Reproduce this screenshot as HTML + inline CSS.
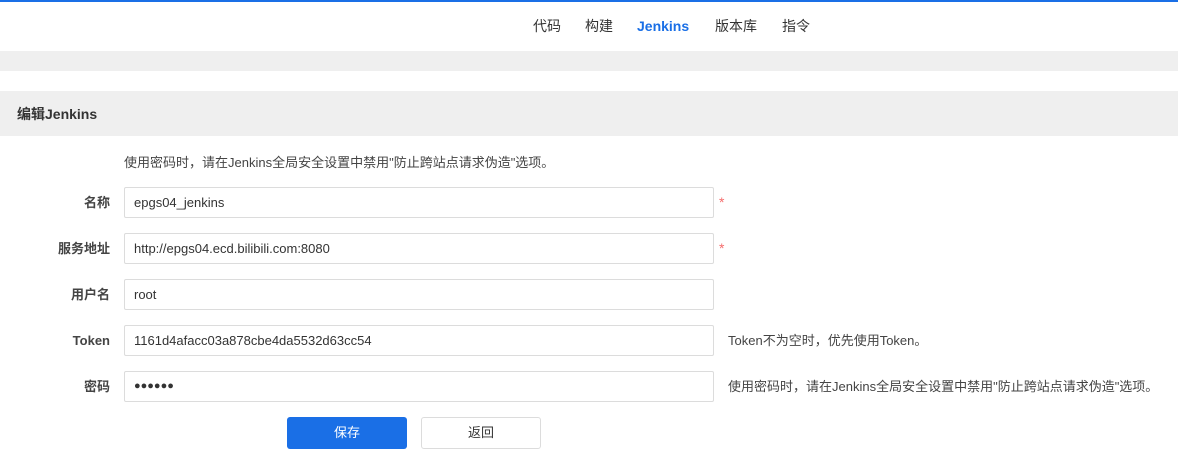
<!DOCTYPE html>
<html><head><meta charset="utf-8"><style>
body{margin:0;width:1178px;height:458px;overflow:hidden;background:#fff;font-family:"Liberation Sans","Noto Sans CJK SC",sans-serif;font-size:13px;color:#333;position:relative;line-height:16px}
.a{position:absolute}
.top{left:0;top:0;width:1178px;height:2px;background:#1a6fe6}
.nav span{position:absolute;top:18px;font-size:14px;color:#333;line-height:16px}
.band{left:0;width:1178px;background:#efefef}
.lbl{position:absolute;right:1068px;font-weight:bold;color:#444;font-size:13px}
.in{position:absolute;left:124px;width:590px;height:31px;border:1px solid #dcdcdc;border-radius:2px;box-sizing:border-box;line-height:29px;padding-left:9px;font-size:13px;color:#333}
.star{position:absolute;left:719px;color:#f56c6c;font-size:14px}
.hint{position:absolute;left:728px;font-size:13px;color:#444}
.btn{position:absolute;top:417px;width:120px;height:32px;border-radius:3px;box-sizing:border-box;text-align:center;line-height:32px;font-size:13px}
</style></head><body>
<div class="a top"></div>
<div class="nav">
<span style="left:533px">代码</span><span style="left:585px">构建</span><span style="left:637px;color:#1a6fe6;font-weight:bold">Jenkins</span><span style="left:715px">版本库</span><span style="left:782px">指令</span>
</div>
<div class="a band" style="top:51px;height:20px"></div>
<div class="a band" style="top:91px;height:45px"></div>
<div class="a" style="left:17px;top:106px;font-weight:bold;font-size:14px;color:#333">编辑Jenkins</div>
<div class="a" style="left:124px;top:155px;color:#444">使用密码时，请在Jenkins全局安全设置中禁用"防止跨站点请求伪造"选项。</div>

<div class="lbl" style="top:195px">名称</div>
<div class="in" style="top:187px">epgs04_jenkins</div><div class="star" style="top:194px">*</div>
<div class="lbl" style="top:241px">服务地址</div>
<div class="in" style="top:233px">http://epgs04.ecd.bilibili.com:8080</div><div class="star" style="top:240px">*</div>
<div class="lbl" style="top:287px">用户名</div>
<div class="in" style="top:279px">root</div>
<div class="lbl" style="top:333px">Token</div>
<div class="in" style="top:325px">1161d4afacc03a878cbe4da5532d63cc54</div>
<div class="hint" style="top:333px">Token不为空时，优先使用Token。</div>
<div class="lbl" style="top:379px">密码</div>
<div class="in" style="top:371px;font-size:11px">●●●●●●</div>
<div class="hint" style="top:379px">使用密码时，请在Jenkins全局安全设置中禁用"防止跨站点请求伪造"选项。</div>

<div class="btn" style="left:287px;background:#1a6fe6;color:#fff">保存</div>
<div class="btn" style="left:421px;border:1px solid #dcdcdc;color:#333;line-height:30px">返回</div>
</body></html>
